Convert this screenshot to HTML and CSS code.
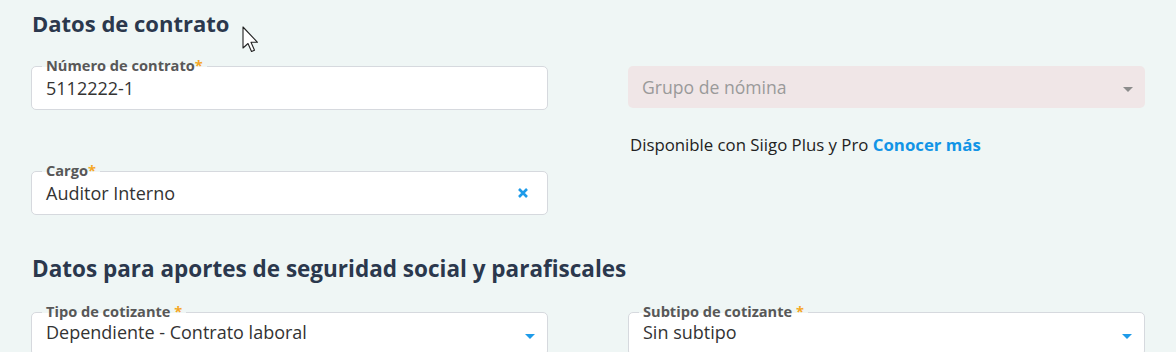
FILE: index.html
```html
<!DOCTYPE html>
<html lang="es">
<head>
<meta charset="utf-8">
<link rel="stylesheet" href="styles.css">
</head>
<body>
<main class="page">
  <h2 class="section-title">Datos de contrato</h2>
  <div class="grid">
    <div class="col">
      <div class="field">
        <span class="label">Número de contrato<span class="req">*</span></span>
        <span class="value">5112222-1</span>
      </div>
      <div class="field field-cargo">
        <span class="label">Cargo<span class="req">*</span></span>
        <span class="value">Auditor Interno</span>
        <svg class="clear" width="12" height="12" viewBox="0 0 12 12"><path d="M2 2L10 10M10 2L2 10" stroke="#1e9be9" stroke-width="2.6" stroke-linecap="butt"/></svg>
      </div>
    </div>
    <div class="col col-right">
      <div class="field field-disabled">
        <span class="placeholder">Grupo de nómina</span>
        <span class="caret caret-gray"></span>
      </div>
      <p class="hint">Disponible con Siigo Plus y Pro <a class="link" href="#">Conocer más</a></p>
    </div>
  </div>

  <h2 class="section-title section-title-2">Datos para aportes de seguridad social y parafiscales</h2>
  <div class="grid">
    <div class="col">
      <div class="field">
        <span class="label">Tipo de cotizante <span class="req">*</span></span>
        <span class="value value-select">Dependiente - Contrato laboral</span>
        <span class="caret"></span>
      </div>
    </div>
    <div class="col">
      <div class="field">
        <span class="label">Subtipo de cotizante <span class="req">*</span></span>
        <span class="value value-select">Sin subtipo</span>
        <span class="caret"></span>
      </div>
    </div>
  </div>
</main>
<svg class="cursor" width="20" height="30" viewBox="0 0 20 30"><path d="M1 1L1 22L6 17.5L9.5 25.5L12.5 24.2L9 16.3L15.5 16.3Z" fill="#fff" stroke="#222" stroke-width="1.1" stroke-linejoin="round"/></svg>
</body>
</html>
```
FILE: styles.css
```css
html, body {
  margin: 0;
  padding: 0;
  background: #eff6f5;
  font-family: "Open Sans", "Noto Sans", sans-serif;
  color: #333;
  overflow: hidden;
}
.page {
  padding: 8px 31px 0 31px;
  width: 1114px;
}
.section-title {
  margin: 0;
  font-size: 22px;
  line-height: 30px;
  font-weight: 700;
  color: #2b384d;
  padding-left: 1px;
}
.section-title-2 {
  margin-top: 39px;
  font-size: 22.5px;
}
.grid {
  display: grid;
  grid-template-columns: 517px 517px;
  column-gap: 80px;
  margin-top: 28px;
}
.col {
  display: flex;
  flex-direction: column;
  gap: 61px;
}
.col-right {
  gap: 27px;
}
.field {
  position: relative;
  height: 44px;
  box-sizing: border-box;
  border: 1px solid #d6d9de;
  border-radius: 5px;
  background: #fff;
  display: flex;
  align-items: center;
  padding: 0 14px;
}
.label {
  position: absolute;
  top: -11px;
  left: 10px;
  padding: 0 4px;
  font-size: 14.6px;
  line-height: 18px;
  font-weight: 700;
  color: #585858;
  background: linear-gradient(to bottom, #eff6f5 0, #eff6f5 11px, #fff 11px);
}
.req {
  color: #f5a623;
}
.value {
  font-size: 18px;
  color: #333;
  flex: 1;
  padding-bottom: 1px;
}
.value-select {
  padding-bottom: 4px;
}
.field-disabled {
  border: none;
  background: #f0e6e7;
  height: 42px;
}
.placeholder {
  flex: 1;
  font-size: 17.6px;
  color: #9a9a9a;
}
.caret {
  width: 0;
  height: 0;
  border-left: 5px solid transparent;
  border-right: 5px solid transparent;
  border-top: 5px solid #1e9be9;
  margin-right: -2px;
  margin-top: 4px;
}
.caret-gray {
  border-top-color: #8c8c8c;
}
.clear {
  margin-right: 4px;
}
.hint {
  margin: 0 0 0 2px;
  font-size: 16.8px;
  line-height: 20px;
  color: #222;
}
.link {
  color: #1294e6;
  font-weight: 700;
  text-decoration: none;
}
.cursor {
  position: absolute;
  left: 242px;
  top: 26px;
}
```
